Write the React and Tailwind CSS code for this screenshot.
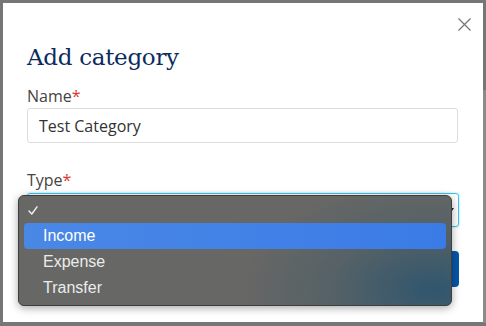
import React from "react";

export default function App() {
  return (
    <div className="w-[486px] h-[326px] bg-[#767676] overflow-hidden p-[3px] relative">
      <div className="absolute right-0 top-[90px] w-[3px] h-[233px] bg-[#8a8a8a]" />
      <div className="relative w-[480px] h-[319px] bg-white px-6 pt-[39px]">
        <button className="absolute left-[455px] top-[15px] w-[13px] h-[13px]">
          <svg width="13" height="13" viewBox="0 0 13 13" className="block">
            <path d="M0.5 0.5 L12.5 12.5 M12.5 0.5 L0.5 12.5" stroke="#777" strokeWidth="1.3" fill="none" />
          </svg>
        </button>
        <h2 className="text-[23px] leading-[30px] text-[#0b2b5e] font-['DejaVu_Serif',serif] tracking-[-0.3px]">
          Add category
        </h2>
        <div className="mt-[12px] font-['Open_Sans',sans-serif]">
          <label className="block text-[16px] leading-[24px] text-[#444]">
            Name<span className="text-[#e3342f]">*</span>
          </label>
          <div className="h-[35px] w-[431px] border border-[#dcdcdc] rounded-[3px] flex items-center px-[11px] text-[16px] text-[#333]">
            Test Category
          </div>
          <label className="block mt-[25px] text-[16px] leading-[24px] text-[#444]">
            Type<span className="text-[#e3342f]">*</span>
          </label>
          <div className="mt-px h-[34px] w-[432px] border border-[#3cc3ec] rounded-[3px] shadow-[0_0_2px_rgba(60,195,236,0.6)] flex items-center justify-end pr-[4px]">
            <svg width="7" height="5" viewBox="0 0 7 5"><path d="M0 0 L7 0 L3.5 5 Z" fill="#222" /></svg>
          </div>
          <div className="mt-[24px] flex justify-end w-[432px]">
            <div className="h-[36px] w-[90px] rounded-[4px] bg-[#0657a6]" />
          </div>
        </div>

        <div className="absolute left-[15px] top-[192px] w-[434px] h-[111px] rounded-[6px] border border-[#3e3e3e] bg-[#676765] bg-[radial-gradient(ellipse_190px_110px_at_96%_86%,rgba(45,85,110,0.95),rgba(60,90,105,0.4)_55%,rgba(60,90,105,0)_100%)] shadow-[0_2px_8px_rgba(0,0,0,0.35)] pt-[2px] font-['Liberation_Sans',sans-serif] text-[16px] text-[#ececec]">
          <div className="h-[25px] flex items-center pl-[9px]">
            <svg width="10" height="9" viewBox="0 0 10 9">
              <path d="M1 5 L3.8 8 L9 0.8" stroke="#f2f2f2" strokeWidth="1.4" fill="none" strokeLinecap="round" strokeLinejoin="round" />
            </svg>
          </div>
          <div className="mx-[5px] h-[26px] rounded-[4px] bg-gradient-to-r from-[#4a88e6] to-[#3b7be6] flex items-center pl-[19px] text-white">
            Income
          </div>
          <div className="h-[26px] flex items-center pl-[24px]">Expense</div>
          <div className="h-[26px] flex items-center pl-[24px]">Transfer</div>
        </div>
      </div>
    </div>
  );
}
